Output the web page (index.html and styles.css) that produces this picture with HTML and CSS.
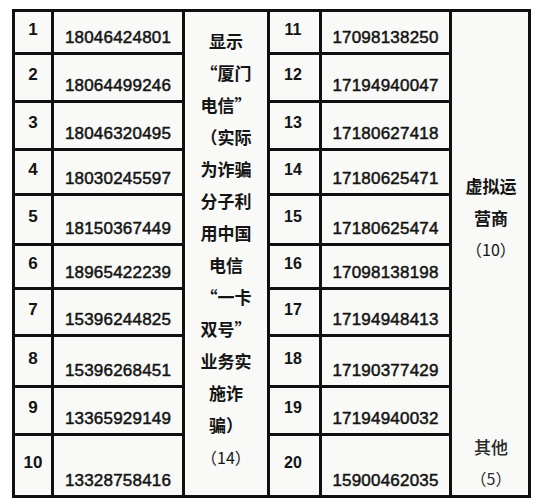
FILE: index.html
```html
<!DOCTYPE html>
<html lang="zh-CN">
<head>
<meta charset="utf-8">
<link rel="stylesheet" href="styles.css">
</head>
<body>
<table class="grid">
  <colgroup>
    <col class="c-idx"><col class="c-phone"><col class="c-desc"><col class="c-idx2"><col class="c-phone2"><col class="c-cat">
  </colgroup>
  <tbody>
    <tr class="r1">
      <td class="idx">1</td><td class="phone">18046424801</td>
      <td class="desc" rowspan="10">显示<br>“厦门<br>电信”<br>（实际<br>为诈骗<br>分子利<br>用中国<br>电信<br>“一卡<br>双号”<br>业务实<br>施诈<br>骗）<br><span class="cnt">（14）</span></td>
      <td class="idx idx-r">11</td><td class="phone">17098138250</td>
      <td class="cat" rowspan="10">
        <div class="cat-main">虚拟运<br>营商<br><span class="cnt">（10）</span></div>
        <div class="cat-other">其他<br><span class="cnt">（5）</span></div>
      </td>
    </tr>
    <tr class="r2"><td class="idx">2</td><td class="phone">18064499246</td><td class="idx idx-r">12</td><td class="phone">17194940047</td></tr>
    <tr class="r3"><td class="idx">3</td><td class="phone">18046320495</td><td class="idx idx-r">13</td><td class="phone">17180627418</td></tr>
    <tr class="r4"><td class="idx">4</td><td class="phone">18030245597</td><td class="idx idx-r">14</td><td class="phone">17180625471</td></tr>
    <tr class="r5"><td class="idx">5</td><td class="phone">18150367449</td><td class="idx idx-r">15</td><td class="phone">17180625474</td></tr>
    <tr class="r6"><td class="idx">6</td><td class="phone">18965422239</td><td class="idx idx-r">16</td><td class="phone">17098138198</td></tr>
    <tr class="r7"><td class="idx">7</td><td class="phone">15396244825</td><td class="idx idx-r">17</td><td class="phone">17194948413</td></tr>
    <tr class="r8"><td class="idx">8</td><td class="phone">15396268451</td><td class="idx idx-r">18</td><td class="phone">17190377429</td></tr>
    <tr class="r9"><td class="idx">9</td><td class="phone">13365929149</td><td class="idx idx-r">19</td><td class="phone">17194940032</td></tr>
    <tr class="r10"><td class="idx">10</td><td class="phone">13328758416</td><td class="idx idx-r">20</td><td class="phone">15900462035</td></tr>
  </tbody>
</table>
</body>
</html>
```

FILE: styles.css
```css
html, body {
  margin: 0;
  padding: 0;
  background: #ffffff;
}
body {
  padding: 9px 0 0 12px;
  width: 538px;
  height: 500px;
  box-sizing: border-box;
  overflow: hidden;
}
.grid {
  border-collapse: collapse;
  table-layout: fixed;
  width: 516px;
  background: #f9f9f7;
  color: #141414;
  border: 3px solid #101010;
}
.grid td {
  border: 3px solid #101010;
  padding: 0;
  text-align: center;
}
.c-idx { width: 39px; }
.c-phone { width: 131px; }
.c-desc { width: 85px; }
.c-idx2 { width: 52px; }
.c-phone2 { width: 130px; }
.c-cat { width: 79px; }

.r1 { height: 43px; }
.r2 { height: 47px; }
.r3 { height: 48px; }
.r4 { height: 45px; }
.r5 { height: 49px; }
.r6 { height: 44px; }
.r7 { height: 47px; }
.r8 { height: 50px; }
.r9 { height: 48px; }
.r10 { height: 61px; }

.idx {
  font-family: "Liberation Sans", Arial, sans-serif;
  font-weight: bold;
  font-size: 17px;
  vertical-align: middle;
  padding-bottom: 4px !important;
}
.idx-r {
  font-size: 16px;
  padding-right: 3px !important;
}
.phone {
  font-family: "Liberation Sans", Arial, sans-serif;
  font-size: 17px;
  letter-spacing: 0.2px;
  vertical-align: bottom;
  padding-bottom: 5px !important;
  line-height: 18px;
  -webkit-text-stroke: 0.5px #141414;
}
.desc, .cat {
  font-family: "Noto Sans CJK SC", "Noto Sans", sans-serif;
  font-weight: bold;
  font-size: 17px;
  line-height: 32px;
}
.desc {
  vertical-align: middle;
  padding-bottom: 8px !important;
}
.cnt {
  font-weight: normal;
  font-size: 16px;
}
.cat {
  vertical-align: top;
  padding-left: 2px !important;
}
.cat-main {
  line-height: 31.5px;
  margin-top: 158px;
}
.cat-other {
  line-height: 31.5px;
  margin-top: 165px;
  font-weight: 500;
  color: #2a2a2a;
}
```
